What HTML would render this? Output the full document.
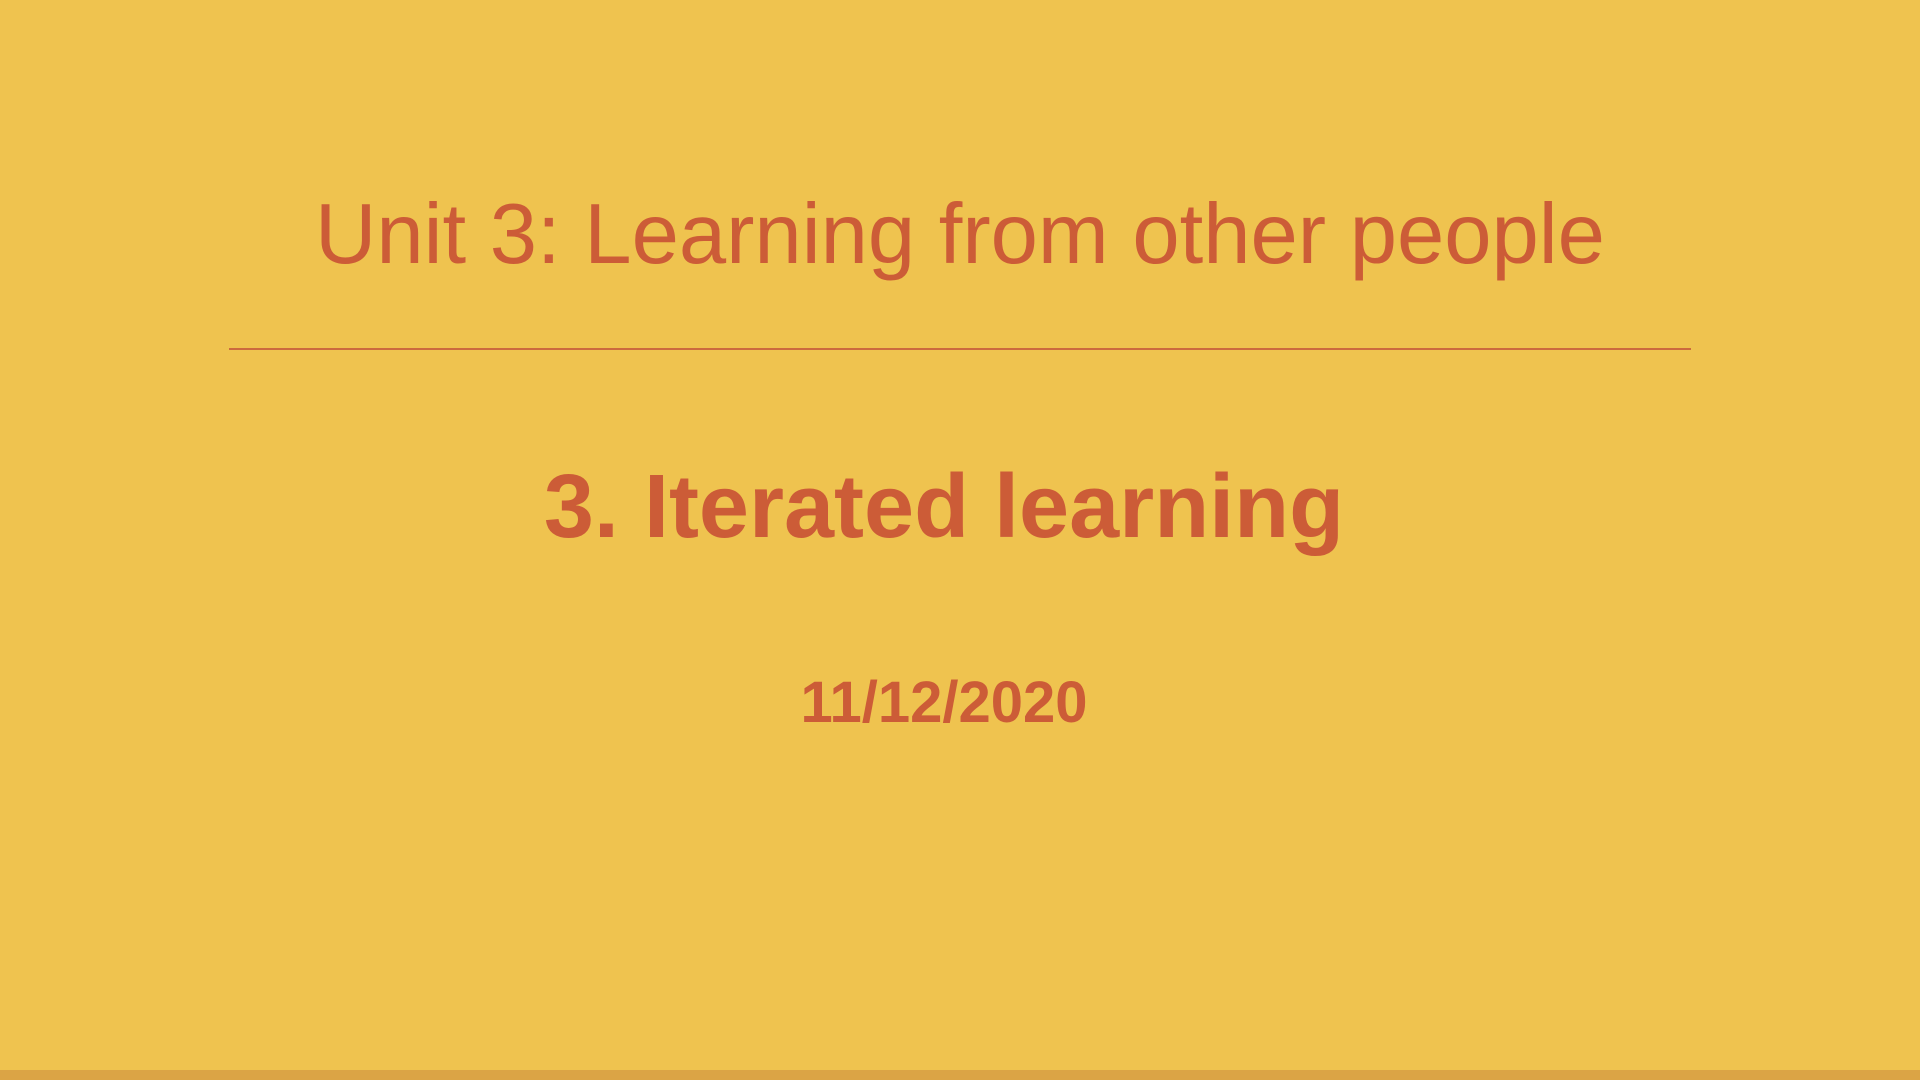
<!DOCTYPE html>
<html><head><meta charset="utf-8"><style>
html,body{margin:0;padding:0}
body{width:1920px;height:1080px;background:#efc34f;position:relative;overflow:hidden;font-family:"Liberation Sans","DejaVu Sans",sans-serif;color:#cc5c37}
.t{position:absolute;left:0;width:1920px;text-align:center;white-space:nowrap}
#a{top:192px;font-size:85px;line-height:85px}
#b{top:462px;left:-16px;font-size:90px;line-height:90px;font-weight:bold}
#c{top:674px;left:-16px;font-size:58px;line-height:58px;font-weight:bold}
#line{position:absolute;left:229px;top:348px;width:1462px;height:2px;background:#cc6a3e}
#bar{position:absolute;left:0;bottom:0;width:1920px;height:10px;background:#dba445}
</style></head><body>
<div class="t" id="a">Unit 3: Learning from other people</div>
<div id="line"></div>
<div class="t" id="b">3. Iterated learning</div>
<div class="t" id="c">11/12/2020</div>
<div id="bar"></div>
</body></html>
